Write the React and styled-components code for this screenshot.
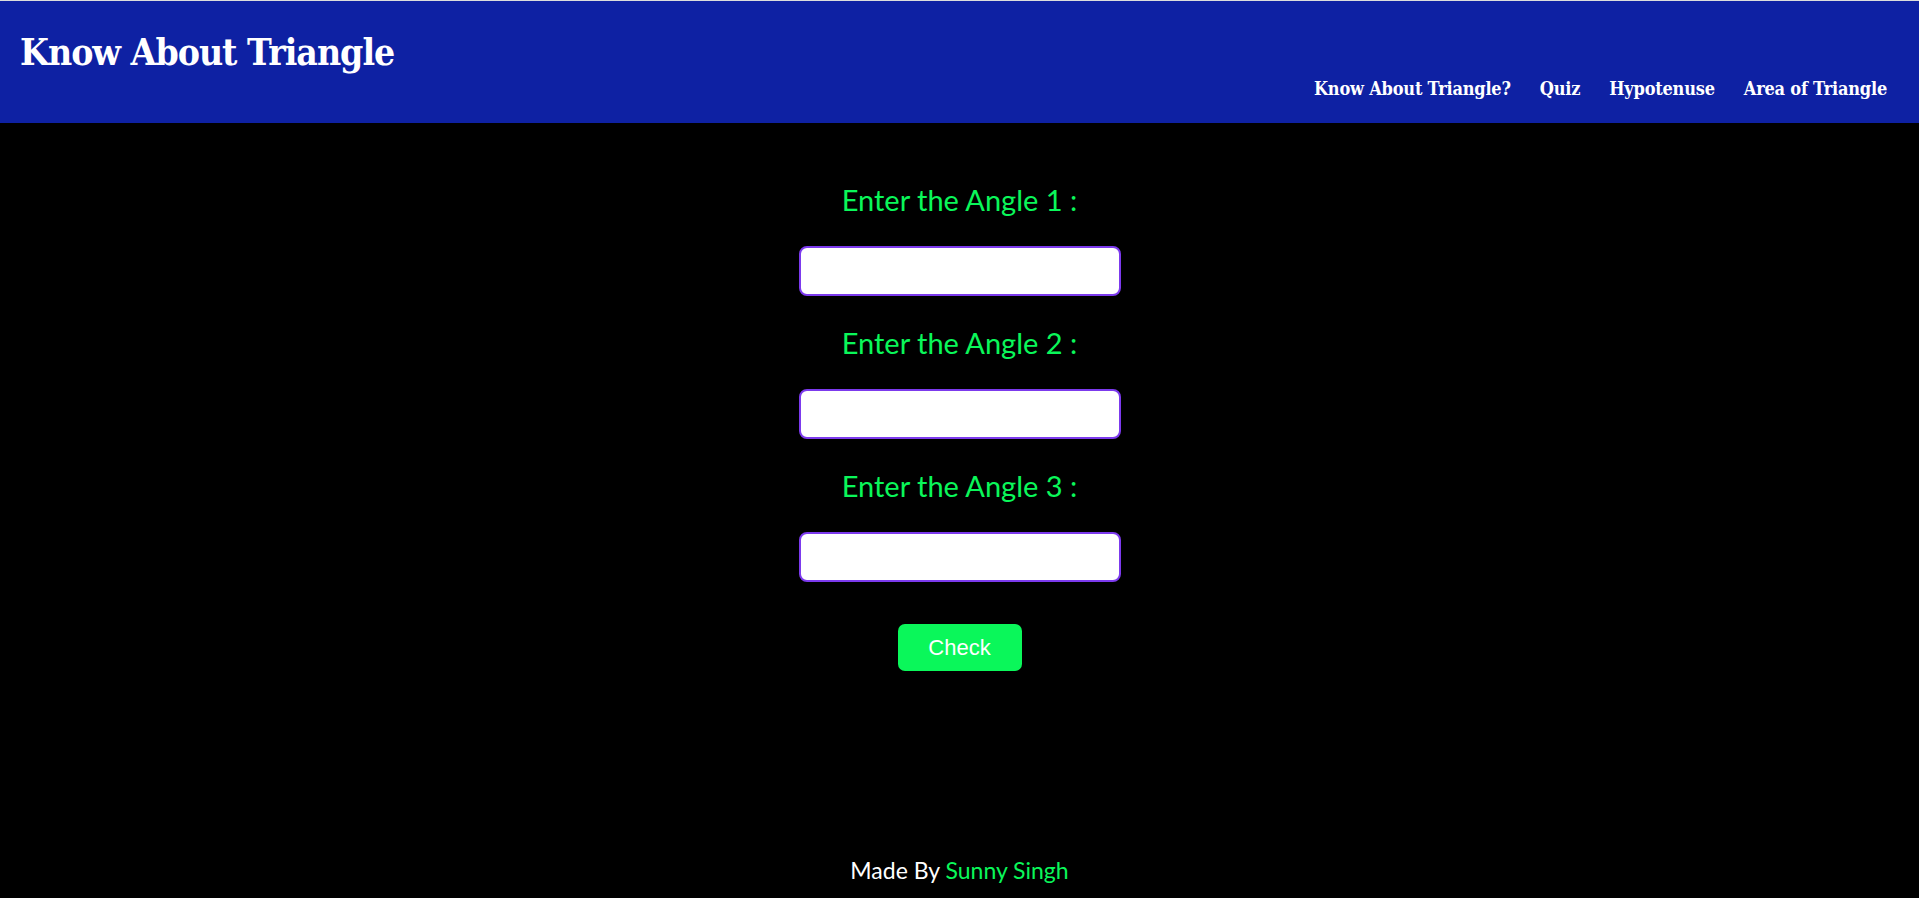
import React from 'react'
import styled, { createGlobalStyle } from 'styled-components'

const GlobalStyle = createGlobalStyle`
  * { box-sizing: border-box; }
  body {
    margin: 0;
    background: #000;
    font-family: Lato, "Noto Sans", sans-serif;
  }
`

const Page = styled.div`
  min-height: 100vh;
  display: flex;
  flex-direction: column;
  background: #000;
`

const Header = styled.header`
  height: 123px;
  border-top: 1px solid #dcdcdc;
  background: #0e21a3;
  display: flex;
  justify-content: space-between;
  align-items: flex-start;
  padding: 0 32px 0 20px;
`

const Title = styled.h1`
  margin: 27px 0 0;
  color: #fff;
  font-family: "DejaVu Serif", "Liberation Serif", serif;
  font-stretch: condensed;
  font-weight: 700;
  font-size: 37px;
  line-height: 48px;
  letter-spacing: -1px;
`

const Nav = styled.nav`
  align-self: flex-end;
  display: flex;
  gap: 29px;
  padding-bottom: 22px;
`

const NavLink = styled.a`
  color: #fff;
  text-decoration: none;
  font-family: "DejaVu Serif", "Liberation Serif", serif;
  font-stretch: condensed;
  font-weight: 700;
  font-size: 18px;
  line-height: 24px;
  letter-spacing: -0.2px;
  cursor: pointer;
`

const Main = styled.main`
  flex: 1;
  display: flex;
  flex-direction: column;
  align-items: center;
  padding-top: 57px;
`

const Field = styled.div`
  display: flex;
  flex-direction: column;
  align-items: center;
  gap: 26px;
  margin-bottom: 27px;
`

const Label = styled.label`
  color: #0af75a;
  font-size: 29px;
  line-height: 40px;
`

const Input = styled.input`
  width: 322px;
  height: 50px;
  border: 2px solid #7c3aed;
  border-radius: 8px;
  background: #fff;
  outline: none;
  padding: 0 10px;
  font-size: 20px;
`

const Button = styled.button`
  margin-top: 15px;
  width: 124px;
  height: 47px;
  border: none;
  border-radius: 7px;
  background: #0af75a;
  color: #fff;
  font-family: "Liberation Sans", Arial, sans-serif;
  font-size: 22px;
  cursor: pointer;
`

const Footer = styled.footer`
  text-align: center;
  color: #fff;
  font-size: 23px;
  line-height: 24px;
  padding-bottom: 16px;
`

const Author = styled.span`
  color: #0af75a;
`

const links = ['Know About Triangle?', 'Quiz', 'Hypotenuse', 'Area of Triangle']

export default function App() {
  return (
    <>
      <GlobalStyle />
      <Page>
        <Header>
          <Title>Know About Triangle</Title>
          <Nav>
            {links.map((l) => (
              <NavLink key={l}>{l}</NavLink>
            ))}
          </Nav>
        </Header>
        <Main>
          {[1, 2, 3].map((n) => (
            <Field key={n}>
              <Label>Enter the Angle {n} :</Label>
              <Input type="number" />
            </Field>
          ))}
          <Button>Check</Button>
        </Main>
        <Footer>
          Made By <Author>Sunny Singh</Author>
        </Footer>
      </Page>
    </>
  )
}
